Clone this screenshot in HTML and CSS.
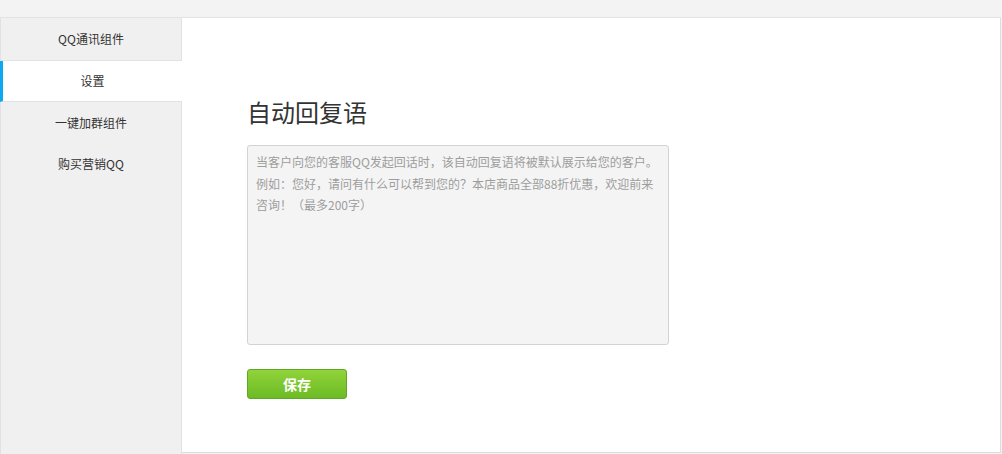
FILE: index.html
```html
<!DOCTYPE html>
<html lang="zh-CN">
<head>
  <meta charset="UTF-8">
  <title>自动回复语</title>
  <link rel="stylesheet" href="styles.css">
</head>
<body>
  <div class="page">
    <!-- left menu -->
    <ul class="side-nav">
      <li class="nav-item first">QQ通讯组件</li>
      <li class="nav-item active">设置</li>
      <li class="nav-item">一键加群组件</li>
      <li class="nav-item">购买营销QQ</li>
    </ul>

    <div class="main">
      <h2 class="title">自动回复语</h2>
      <textarea class="reply-box" placeholder="当客户向您的客服QQ发起回话时，该自动回复语将被默认展示给您的客户。&#10;例如：您好，请问有什么可以帮到您的？本店商品全部88折优惠，欢迎前来&#10;咨询！（最多200字）"></textarea>
      <div class="actions">
        <button class="save-btn">保存</button>
      </div>
    </div>
  </div>
</body>
</html>
```

FILE: styles.css
```css
body {
  margin: 0;
  background: #f3f3f3;
  font-family: "Noto Sans CJK SC", "Noto Sans", sans-serif;
  font-size: 12px;
  color: #333;
}
.page {
  display: flex;
  margin-top: 17px;
  margin-right: 1px;
  border-top: 1px solid #e2e2e2;
  height: 436px;
}
.side-nav {
  list-style: none;
  margin: 0;
  padding: 0;
  width: 180px;
  background: #f0f0f0;
  border-left: 1px solid #e2e2e2;
  border-right: 1px solid #e2e2e2;
}
.nav-item {
  line-height: 41px;
  text-align: center;
  font-size: 12px;
  color: #333;
  cursor: pointer;
}
.nav-item.first {
  line-height: 42px;
  border-bottom: 1px solid #e2e2e2;
}
.nav-item.active {
  line-height: 40px;
  background: #fff;
  border-left: 3px solid #0ea8f2;
  margin-left: -1px;
  margin-right: -1px;
  border-bottom: 1px solid #e2e2e2;
  position: relative;
}
.main {
  flex: 1;
  background: #fff;
  border-right: 1px solid #dcdcdc;
  border-bottom: 1px solid #dcdcdc;
  height: 434px;
  padding: 79px 0 0 65px;
  box-sizing: border-box;
  height: 435px;
}
.title {
  margin: 0 0 18px;
  font-size: 24px;
  line-height: 30px;
  font-weight: normal;
  color: #333;
}
.reply-box {
  display: block;
  width: 422px;
  height: 200px;
  box-sizing: border-box;
  margin: 0;
  padding: 5px 8px;
  border: 1px solid #d3d3d3;
  border-radius: 3px;
  background: #f4f4f4;
  font-family: "Noto Sans CJK SC", "Noto Sans", sans-serif;
  font-size: 12px;
  line-height: 21.5px;
  color: #333;
  resize: none;
  outline: none;
  overflow: hidden;
}
.reply-box::placeholder {
  color: #9d9d9d;
}
.actions {
  margin-top: 24px;
}
.save-btn {
  width: 100px;
  height: 30px;
  border: 1px solid #5ea923;
  border-radius: 3px;
  background: linear-gradient(to bottom, #91d33a, #6cbb25);
  color: #fff;
  font-family: "Noto Sans CJK SC", "Noto Sans", sans-serif;
  font-size: 14px;
  font-weight: bold;
  cursor: pointer;
  padding: 0;
}
```
